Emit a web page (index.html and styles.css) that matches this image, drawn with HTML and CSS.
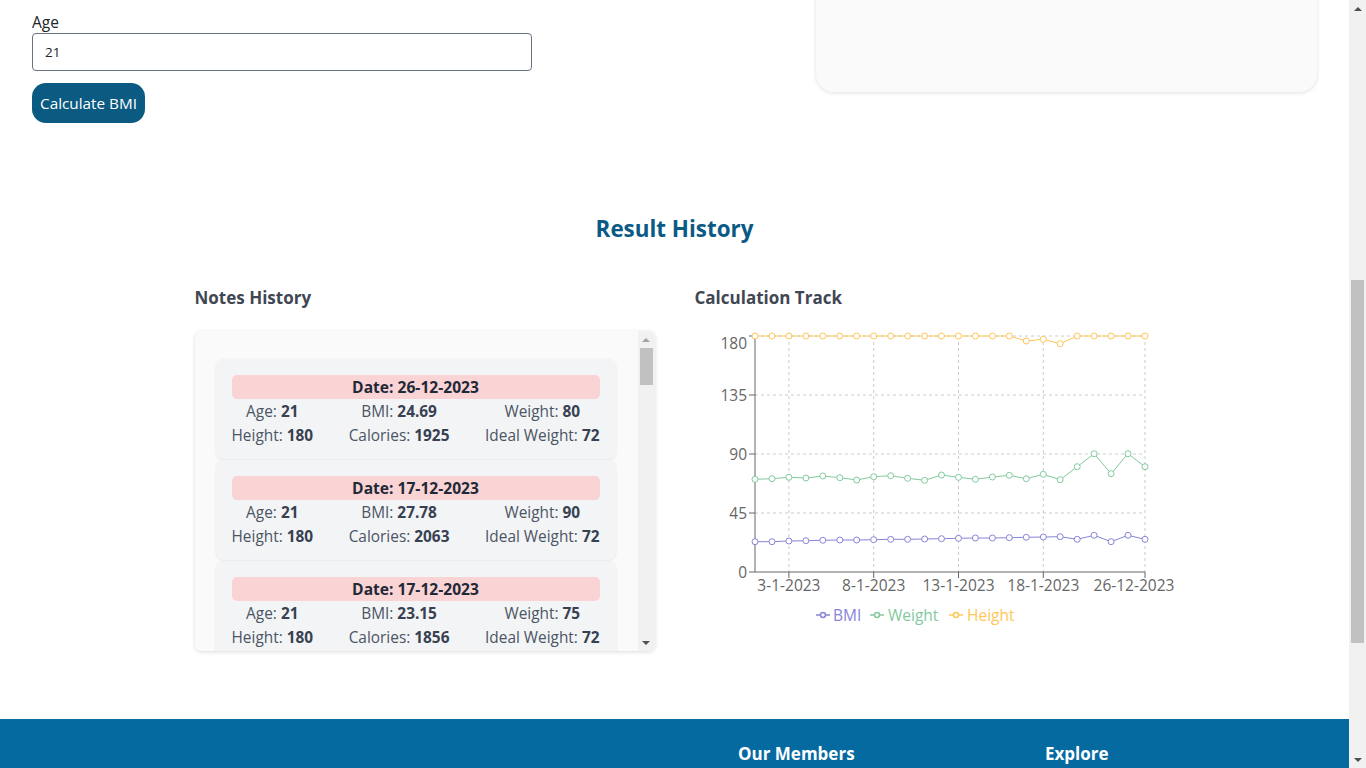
FILE: index.html
```html
<!DOCTYPE html>
<html lang="en">
<head>
<meta charset="utf-8">
<title>BMI Calculator</title>
<link rel="stylesheet" href="styles.css">
</head>
<body>
<div class="screen">
  <div class="page">
    <section class="top">
      <form class="bmi-form">
        <label class="field-label" for="age">Age</label>
        <input class="field" id="age" type="text" value="21">
        <button type="button" class="btn">Calculate BMI</button>
      </form>
      <div class="summary-card"></div>
    </section>

    <section class="history">
      <h2 class="history-title">Result History</h2>
      <div class="history-grid">
        <div class="col">
          <h3 class="col-title">Notes History</h3>
          <div class="notes-box">
            <div class="notes-list">
              <div class="note">
                <div class="note-date">Date: 26-12-2023</div>
                <div class="note-grid">
                  <span>Age: <b>21</b></span><span>BMI: <b>24.69</b></span><span>Weight: <b>80</b></span>
                  <span>Height: <b>180</b></span><span>Calories: <b>1925</b></span><span>Ideal Weight: <b>72</b></span>
                </div>
              </div>
              <div class="note">
                <div class="note-date">Date: 17-12-2023</div>
                <div class="note-grid">
                  <span>Age: <b>21</b></span><span>BMI: <b>27.78</b></span><span>Weight: <b>90</b></span>
                  <span>Height: <b>180</b></span><span>Calories: <b>2063</b></span><span>Ideal Weight: <b>72</b></span>
                </div>
              </div>
              <div class="note">
                <div class="note-date">Date: 17-12-2023</div>
                <div class="note-grid">
                  <span>Age: <b>21</b></span><span>BMI: <b>23.15</b></span><span>Weight: <b>75</b></span>
                  <span>Height: <b>180</b></span><span>Calories: <b>1856</b></span><span>Ideal Weight: <b>72</b></span>
                </div>
              </div>
            </div>
            <div class="mini-scroll">
              <div class="sb-btn"><span class="tri-up light"></span></div>
              <div class="mini-thumb"></div>
              <div class="sb-fill"></div>
              <div class="sb-btn"><span class="tri-down"></span></div>
            </div>
          </div>
        </div>
        <div class="col">
          <h3 class="col-title">Calculation Track</h3>
          <svg class="chart" width="490" height="310" viewBox="695 320 490 310" xmlns="http://www.w3.org/2000/svg">
            <defs>
              <marker id="dB" viewBox="-4 -4 8 8" refX="0" refY="0" markerWidth="8" markerHeight="8" markerUnits="userSpaceOnUse"><circle r="3" fill="#fff" stroke="#8884d8" stroke-width="1"/></marker>
              <marker id="dW" viewBox="-4 -4 8 8" refX="0" refY="0" markerWidth="8" markerHeight="8" markerUnits="userSpaceOnUse"><circle r="3" fill="#fff" stroke="#82ca9d" stroke-width="1"/></marker>
              <marker id="dH" viewBox="-4 -4 8 8" refX="0" refY="0" markerWidth="8" markerHeight="8" markerUnits="userSpaceOnUse"><circle r="3" fill="#fff" stroke="#ffc658" stroke-width="1"/></marker>
            </defs>
            <g class="grid">
              <line x1="755" y1="336" x2="1145" y2="336"/>
              <line x1="755" y1="395" x2="1145" y2="395"/>
              <line x1="755" y1="454" x2="1145" y2="454"/>
              <line x1="755" y1="513" x2="1145" y2="513"/>
              <line x1="788.9" y1="336" x2="788.9" y2="572"/>
              <line x1="873.7" y1="336" x2="873.7" y2="572"/>
              <line x1="958.5" y1="336" x2="958.5" y2="572"/>
              <line x1="1043.3" y1="336" x2="1043.3" y2="572"/>
              <line x1="1145" y1="336" x2="1145" y2="572"/>
            </g>
            <g class="axis">
              <line x1="755" y1="336" x2="755" y2="572"/>
              <line x1="749" y1="336" x2="755" y2="336"/>
              <line x1="749" y1="395" x2="755" y2="395"/>
              <line x1="749" y1="454" x2="755" y2="454"/>
              <line x1="749" y1="513" x2="755" y2="513"/>
              <line x1="749" y1="572" x2="755" y2="572"/>
              <line x1="755" y1="572" x2="1145" y2="572"/>
              <line x1="788.9" y1="572" x2="788.9" y2="578"/>
              <line x1="873.7" y1="572" x2="873.7" y2="578"/>
              <line x1="958.5" y1="572" x2="958.5" y2="578"/>
              <line x1="1043.3" y1="572" x2="1043.3" y2="578"/>
              <line x1="1145" y1="572" x2="1145" y2="578"/>
            </g>
            <g class="ytick">
              <text x="747" y="343">180</text>
              <text x="747" y="395">135</text>
              <text x="747" y="454">90</text>
              <text x="747" y="513">45</text>
              <text x="747" y="572">0</text>
            </g>
            <g class="xtick">
              <text x="788.9" y="585">3-1-2023</text>
              <text x="873.7" y="585">8-1-2023</text>
              <text x="958.5" y="585">13-1-2023</text>
              <text x="1043.3" y="585">18-1-2023</text>
              <text x="1134" y="585">26-12-2023</text>
            </g>
            <polyline class="series" stroke="#8884d8" marker-start="url(#dB)" marker-mid="url(#dB)" marker-end="url(#dB)" points="755,541.7 772,541.7 788.9,541 805.9,540.7 822.8,540.3 839.8,540 856.7,540 873.7,539.7 890.7,539.3 907.6,539.3 924.6,539 941.5,538.7 958.5,538.3 975.4,538 992.4,538 1009.3,537.7 1026.3,537.3 1043.3,537 1060.2,536.7 1077.2,539.3 1094.1,535.3 1111.1,541.7 1128,535.3 1145,539.3"/>
            <polyline class="series" stroke="#82ca9d" marker-start="url(#dW)" marker-mid="url(#dW)" marker-end="url(#dW)" points="755,479.3 772,478.7 788.9,477.3 805.9,478 822.8,476 839.8,477.7 856.7,480 873.7,476.7 890.7,475.7 907.6,478.3 924.6,480.3 941.5,475 958.5,477.3 975.4,479.3 992.4,477 1009.3,475.3 1026.3,478.7 1043.3,474.3 1060.2,479.7 1077.2,466.7 1094.1,453.7 1111.1,473.7 1128,453.7 1145,466.7"/>
            <polyline class="series" stroke="#ffc658" marker-start="url(#dH)" marker-mid="url(#dH)" marker-end="url(#dH)" points="755,336 772,336 788.9,336 805.9,336 822.8,336 839.8,336 856.7,336 873.7,336 890.7,336 907.6,336 924.6,336 941.5,336 958.5,336 975.4,336 992.4,336 1009.3,336 1026.3,341 1043.3,339.3 1060.2,343.7 1077.2,336 1094.1,336 1111.1,336 1128,336 1145,336"/>
            <g class="legend">
              <line x1="816" y1="615" x2="830" y2="615" stroke="#8884d8"/>
              <circle cx="823" cy="615" r="2.5" fill="#fff" stroke="#8884d8"/>
              <text x="833" y="615" fill="#8884d8">BMI</text>
              <line x1="870" y1="615" x2="884" y2="615" stroke="#82ca9d"/>
              <circle cx="877" cy="615" r="2.5" fill="#fff" stroke="#82ca9d"/>
              <text x="888" y="615" fill="#82ca9d">Weight</text>
              <line x1="949" y1="615" x2="963" y2="615" stroke="#ffc658"/>
              <circle cx="956" cy="615" r="2.5" fill="#fff" stroke="#ffc658"/>
              <text x="967" y="615" fill="#ffc658">Height</text>
            </g>
          </svg>
        </div>
      </div>
    </section>

    <footer class="footer">
      <div class="footer-inner">
        <div class="footer-col"></div>
        <div class="footer-col"><h4 class="footer-title">Our Members</h4></div>
        <div class="footer-col"><h4 class="footer-title">Explore</h4></div>
      </div>
    </footer>
  </div>
  <div class="vscroll">
    <div class="sb-btn"><span class="tri-up"></span></div>
    <div class="sb-gap"></div>
    <div class="page-thumb"></div>
    <div class="sb-fill"></div>
    <div class="sb-btn"><span class="tri-down"></span></div>
  </div>
</div>
</body>
</html>
```

FILE: styles.css
```css
* { box-sizing: border-box; }
html, body { margin: 0; padding: 0; height: 768px; overflow: hidden; }
body {
  font-family: "Open Sans", "Noto Sans", "Liberation Sans", sans-serif;
  color: #212529;
  background: #fff;
}
.screen { display: flex; width: 1366px; height: 768px; }
.page { width: 1349px; height: 768px; overflow: hidden; display: flex; flex-direction: column; }

/* top form */
.top { display: flex; justify-content: space-between; align-items: flex-start; padding: 0 32px; }
.bmi-form { width: 500px; display: flex; flex-direction: column; align-items: flex-start; padding-top: 11px; }
.field-label { font-size: 15.5px; line-height: 22px; }
.field {
  width: 500px; height: 38px; border: 1px solid #6b7280; border-radius: 4px;
  padding: 0 12px; font: inherit; font-size: 13.5px; color: #212529; background: #fff;
}
.btn {
  margin-top: 12px; height: 40px; padding: 0 8px; border: none; border-radius: 14px;
  background: #0a5a82; color: #fff; font: inherit; font-size: 15.3px;
}
.summary-card {
  width: 501px; height: 132px; margin-top: -40px; background: #fafafa; border-radius: 18px;
  box-shadow: 0 1px 4px rgba(0,0,0,0.12);
}

/* history */
.history { padding-top: 91px; }
.history-title {
  margin: 0; text-align: center; font-size: 22.4px; line-height: 30px; font-weight: 700; color: #0b5a85;
}
.history-grid {
  width: 960px; margin: 42px auto 0; display: grid; grid-template-columns: 460px 460px; column-gap: 40px;
}
.col-title { margin: 0; font-size: 17px; line-height: 24px; font-weight: 700; color: #3f4753; }

.notes-box {
  margin-top: 21px; height: 320px; display: flex; background: #fafafa; border-radius: 6px;
  box-shadow: 0 1px 4px rgba(0,0,0,0.14); overflow: hidden;
}
.notes-list { flex: 1; padding: 28px 22px 0 21px; display: flex; flex-direction: column; gap: 1px; }
.note {
  flex: none; background: #f3f4f6; border-radius: 8px; padding: 16px 16px 11px;
  box-shadow: 0 1px 3px rgba(0,0,0,0.08);
}
.note-date {
  height: 24px; line-height: 24px; background: #fad3d4; border-radius: 5px; text-align: center;
  font-size: 15.6px; font-weight: 700; color: #1f2937;
}
.note-grid {
  display: grid; grid-template-columns: repeat(3, auto); justify-content: space-between; justify-items: center;
  padding-top: 1px; font-size: 15.4px; line-height: 24px; color: #4b5563;
}
.note-grid b { color: #374151; font-weight: 700; }

/* scrollbars */
.mini-scroll, .vscroll { width: 17px; flex: none; background: #f1f1f1; display: flex; flex-direction: column; }
.vscroll { height: 768px; }
.sb-btn { height: 17px; flex: none; display: flex; align-items: center; justify-content: center; }
.sb-fill { flex: 1; }
.sb-gap { height: 263px; flex: none; }
.mini-thumb { height: 37px; margin: 0 2px; background: #c1c1c1; flex: none; }
.page-thumb { height: 363px; margin: 0 2px; background: #c1c1c1; flex: none; }
.tri-up, .tri-down { width: 0; height: 0; border-left: 4px solid transparent; border-right: 4px solid transparent; }
.tri-up { border-bottom: 4px solid #505050; }
.tri-down { border-top: 4px solid #505050; }
.tri-up.light { border-bottom-color: #a3a3a3; }

/* chart */
.chart { display: block; margin-top: 10px; overflow: visible; }
.chart text { font-family: "Open Sans", "Noto Sans", sans-serif; font-size: 15.5px; dominant-baseline: central; }
.grid line { stroke: #ccc; stroke-dasharray: 3 3; }
.axis line { stroke: #666; }
.ytick text { fill: #666; text-anchor: end; }
.xtick text { fill: #666; text-anchor: middle; }
.series { fill: none; stroke-width: 1; }
.legend line, .legend circle { stroke-width: 1.5; }

/* footer */
.footer { margin-top: 68px; flex: 1; background: #046aa0; color: #fff; }
.footer-inner { display: grid; grid-template-columns: 706px 307px auto; padding: 23px 0 0 32px; }
.footer-title { margin: 0; font-size: 17px; line-height: 24px; font-weight: 700; }
```
